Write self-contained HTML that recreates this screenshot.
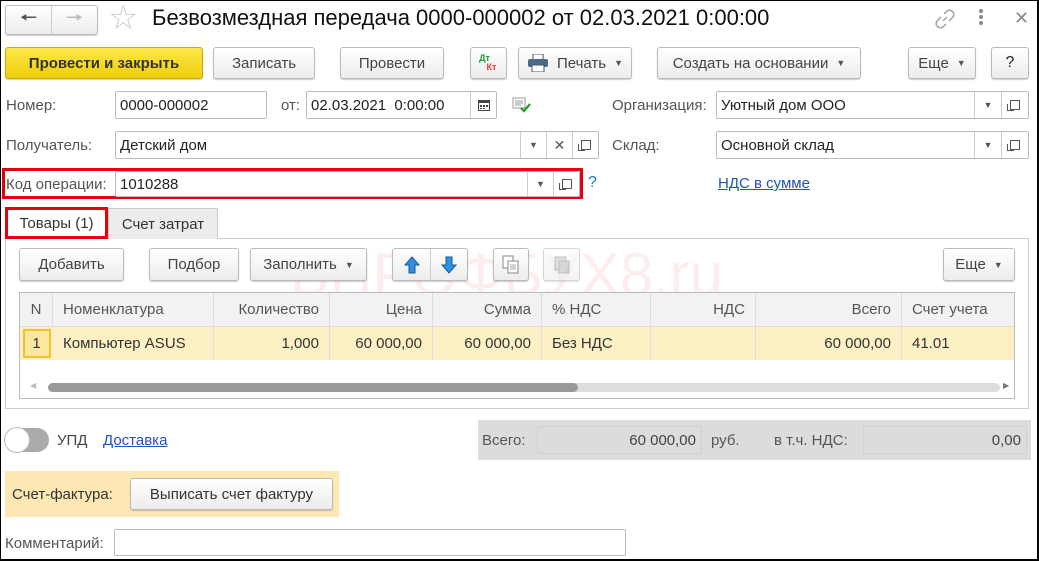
<!DOCTYPE html>
<html><head><meta charset="utf-8"><style>
*{box-sizing:border-box;margin:0;padding:0}
body{width:1039px;height:561px;overflow:hidden;background:#fff;font-family:"Liberation Sans",Arial,sans-serif;font-size:15px;color:#333;position:relative}
.frame{position:absolute;left:0;top:0;width:1039px;height:561px;border:1px solid #000;border-bottom-width:2px;border-right-width:2px}
.a{position:absolute}
.btn{position:absolute;border:1px solid #bbb;border-radius:3px;background:linear-gradient(#fff,#ececec);box-shadow:0 1px 1px rgba(0,0,0,.2);display:flex;align-items:center;justify-content:center;color:#444;white-space:nowrap}
.inp{position:absolute;border:1px solid #bbb;border-radius:2px;background:#fff;padding-left:4px;display:flex;align-items:center;color:#222;white-space:nowrap}
.lbl{position:absolute;color:#555;white-space:nowrap}
.cell{position:absolute;top:0;height:100%;display:flex;align-items:center;padding:0 10px;border-right:1px solid #ddd;white-space:nowrap}
.r{justify-content:flex-end}
.sb{position:absolute;top:0;height:100%;border-left:1px solid #ccc;display:flex;align-items:center;justify-content:center;color:#555;font-size:10px}
.cp{width:10px;height:10px;border:1px solid #555;position:relative;background:#fff}
.cp:before{content:"";position:absolute;left:-4px;top:3px;width:6px;height:6px;border-left:1px solid #555;border-bottom:1px solid #555}
.dd{font-size:9px;color:#555}
</style></head><body>

<!-- header -->
<div class="btn" style="left:5px;top:5px;width:93px;height:30px;"><span style="width:46px;text-align:center;font-size:20px;color:#555">&#129044;</span><span style="width:1px;height:28px;background:#ccc"></span><span style="width:46px;text-align:center;font-size:20px;color:#bbb">&#129046;</span></div>
<div class="a" style="left:108px;top:1px;font-size:34px;color:#ccc;line-height:34px">☆</div>
<div class="a" style="left:152px;top:5px;font-size:22px;color:#111">Безвозмездная передача 0000-000002 от 02.03.2021 0:00:00</div>
<svg class="a" style="left:934px;top:8px" width="22" height="22" viewBox="0 0 22 22"><g fill="none" stroke="#aaa" stroke-width="1.6"><path d="M9 13 L13 9"/><path d="M10 6 L13 3 Q16 1 19 4 Q21 7 18 10 L15 13"/><path d="M12 16 L9 19 Q6 21 3 18 Q1 15 4 12 L7 9"/></g></svg>
<div class="a" style="left:979px;top:9px;width:4px;"><div style="width:4px;height:4px;background:#888;border-radius:2px;margin-bottom:2px"></div><div style="width:4px;height:4px;background:#888;border-radius:2px;margin-bottom:2px"></div><div style="width:4px;height:4px;background:#888;border-radius:2px"></div></div>
<div class="a" style="left:1014px;top:8px;font-size:18px;color:#888">✕</div>

<!-- toolbar -->
<div class="btn" style="left:5px;top:47px;width:198px;height:32px;background:linear-gradient(#fbe84a,#efcd0a);border-color:#c9aa00;color:#333;font-weight:bold">Провести и закрыть</div>
<div class="btn" style="left:213px;top:47px;width:102px;height:32px">Записать</div>
<div class="btn" style="left:340px;top:47px;width:104px;height:32px">Провести</div>
<div class="btn" style="left:470px;top:47px;width:37px;height:32px;flex-direction:column;font-size:9px;font-weight:bold;line-height:9px"><span style="color:#1a9a3a;margin-left:-8px">Дт</span><span style="color:#e33;margin-left:6px">Кт</span></div>
<div class="btn" style="left:518px;top:47px;width:114px;height:32px"><svg width="22" height="18" viewBox="0 0 22 18" style="margin-right:8px"><rect x="6" y="0" width="10" height="6" fill="#fff" stroke="#456" /><rect x="1" y="5" width="20" height="8" rx="2" fill="#4a6a8a"/><rect x="5" y="11" width="12" height="7" fill="#fff" stroke="#456"/></svg>Печать <span class="dd" style="margin-left:8px">▼</span></div>
<div class="btn" style="left:657px;top:47px;width:204px;height:32px">Создать на основании <span class="dd" style="margin-left:8px">▼</span></div>
<div class="btn" style="left:908px;top:47px;width:68px;height:32px">Еще <span class="dd" style="margin-left:8px">▼</span></div>
<div class="btn" style="left:991px;top:47px;width:38px;height:32px;color:#222;font-size:16px">?</div>

<!-- row 1 -->
<div class="lbl" style="left:6px;top:97px">Номер:</div>
<div class="inp" style="left:115px;top:91px;width:152px;height:28px">0000-000002</div>
<div class="lbl" style="left:281px;top:97px">от:</div>
<div class="inp" style="left:306px;top:91px;width:191px;height:28px">02.03.2021&nbsp; 0:00:00<div class="sb" style="right:0;width:26px"><svg width="12" height="12"><rect x="0.5" y="1.5" width="11" height="10" fill="#fff" stroke="#444"/><rect x="0" y="1" width="12" height="3" fill="#444"/><g fill="#444"><rect x="2" y="6" width="2" height="2"/><rect x="5" y="6" width="2" height="2"/><rect x="8" y="6" width="2" height="2"/><rect x="2" y="9" width="2" height="1"/><rect x="5" y="9" width="2" height="1"/></g></svg></div></div>
<svg class="a" style="left:512px;top:97px" width="20" height="16"><rect x="1" y="1" width="12" height="10" fill="#fff" stroke="#999"/><path d="M3 4h8M3 6h8M3 8h6" stroke="#999"/><path d="M9 11l3 3 6-7" stroke="#2a9a2a" stroke-width="2.2" fill="none"/></svg>
<div class="lbl" style="left:612px;top:97px">Организация:</div>
<div class="inp" style="left:716px;top:91px;width:313px;height:28px">Уютный дом ООО<div class="sb" style="right:27px;width:27px"><span class="dd">▼</span></div><div class="sb" style="right:0;width:27px"><div class="cp"></div></div></div>

<!-- row 2 -->
<div class="lbl" style="left:6px;top:137px">Получатель:</div>
<div class="inp" style="left:115px;top:131px;width:484px;height:28px">Детский дом<div class="sb" style="right:52px;width:26px"><span class="dd">▼</span></div><div class="sb" style="right:26px;width:26px;font-size:14px">✕</div><div class="sb" style="right:0;width:26px"><div class="cp"></div></div></div>
<div class="lbl" style="left:612px;top:137px">Склад:</div>
<div class="inp" style="left:716px;top:131px;width:313px;height:28px">Основной склад<div class="sb" style="right:27px;width:27px"><span class="dd">▼</span></div><div class="sb" style="right:0;width:27px"><div class="cp"></div></div></div>

<!-- row 3 -->
<div class="a" style="left:2px;top:168px;width:581px;height:31px;border:3px solid #e5000f"></div>
<div class="lbl" style="left:6px;top:176px">Код операции:</div>
<div class="inp" style="left:115px;top:171px;width:465px;height:26px">1010288<div class="sb" style="right:26px;width:26px"><span class="dd">▼</span></div><div class="sb" style="right:0;width:26px"><div class="cp"></div></div></div>
<div class="a" style="left:588px;top:174px;color:#1a7ad4;font-size:16px">?</div>
<div class="a" style="left:718px;top:175px;color:#1a55b8;text-decoration:underline">НДС в сумме</div>

<!-- tabs -->
<div class="a" style="left:5px;top:238px;width:1024px;height:171px;border:1px solid #ccc"></div>
<div class="a" style="left:108px;top:208px;width:110px;height:31px;background:#ececec;border:1px solid #ccc;border-bottom:none;display:flex;align-items:center;justify-content:center;color:#333">Счет затрат</div>
<div class="a" style="left:5px;top:207px;width:103px;height:32px;background:#fff;border:3px solid #e5000f;display:flex;align-items:center;justify-content:center;color:#333">Товары (1)</div>

<!-- watermark -->
<div class="a" style="left:290px;top:240px;font-size:60px;color:rgba(230,60,60,.09);white-space:nowrap">БПРОФБУХ8.ru</div>
<div class="a" style="left:360px;top:298px;font-size:19px;color:rgba(0,0,0,.07);letter-spacing:5px;white-space:nowrap">Онлайн-курсы по работе в 1С:8</div>

<!-- inner toolbar -->
<div class="btn" style="left:19px;top:248px;width:105px;height:33px">Добавить</div>
<div class="btn" style="left:149px;top:248px;width:90px;height:33px">Подбор</div>
<div class="btn" style="left:250px;top:248px;width:117px;height:33px">Заполнить <span class="dd" style="margin-left:8px">▼</span></div>
<div class="btn" style="left:392px;top:248px;width:76px;height:33px"><svg width="38" height="20"><path d="M19 2l-7 8h4v8h6v-8h4z" fill="#2f8fe0" stroke="#1a5a9a"/></svg><span style="width:1px;height:31px;background:#ccc"></span><svg width="37" height="20"><path d="M18 18l-7-8h4V2h6v8h4z" fill="#2f8fe0" stroke="#1a5a9a"/></svg></div>
<div class="btn" style="left:493px;top:248px;width:36px;height:33px"><svg width="18" height="20"><rect x="1" y="1" width="10" height="12" fill="#fff" stroke="#888"/><rect x="6" y="6" width="10" height="12" fill="#fff" stroke="#888"/><path d="M8 10h6M8 12h6M8 14h6" stroke="#aaa"/></svg></div>
<div class="btn" style="left:543px;top:248px;width:37px;height:33px;opacity:.6"><svg width="18" height="20"><rect x="2" y="2" width="11" height="13" fill="#ccc" stroke="#999"/><rect x="6" y="6" width="10" height="12" fill="#bbb" stroke="#999"/></svg></div>
<div class="btn" style="left:943px;top:248px;width:72px;height:33px">Еще <span class="dd" style="margin-left:8px">▼</span></div>

<!-- table -->
<div class="a" style="left:19px;top:292px;width:996px;height:107px;border:1px solid #bbb"></div>
<div class="a" style="left:20px;top:293px;width:994px;height:34px;background:#f2f2f2;color:#555;border-bottom:1px solid #ddd">
<div class="cell" style="left:0;width:33px;justify-content:center;padding:0">N</div>
<div class="cell" style="left:33px;width:161px">Номенклатура</div>
<div class="cell r" style="left:194px;width:116px">Количество</div>
<div class="cell r" style="left:310px;width:103px">Цена</div>
<div class="cell r" style="left:413px;width:109px">Сумма</div>
<div class="cell" style="left:522px;width:109px">% НДС</div>
<div class="cell r" style="left:631px;width:105px">НДС</div>
<div class="cell r" style="left:736px;width:146px">Всего</div>
<div class="cell" style="left:882px;width:112px;border:none">Счет учета</div>
</div>
<div class="a" style="left:20px;top:327px;width:994px;height:33px;background:#fcf0c4;color:#333">
<div class="cell" style="left:0;width:33px;justify-content:center;padding:0;border:none"><div style="width:28px;height:29px;border:2px solid #f2c12e;background:#fbe79e;display:flex;align-items:center;justify-content:center">1</div></div>
<div class="cell" style="left:33px;width:161px">Компьютер ASUS</div>
<div class="cell r" style="left:194px;width:116px">1,000</div>
<div class="cell r" style="left:310px;width:103px">60 000,00</div>
<div class="cell r" style="left:413px;width:109px">60 000,00</div>
<div class="cell" style="left:522px;width:109px">Без НДС</div>
<div class="cell r" style="left:631px;width:105px"></div>
<div class="cell r" style="left:736px;width:146px">60 000,00</div>
<div class="cell" style="left:882px;width:112px;border:none">41.01</div>
</div>
<div class="a" style="left:48px;top:383px;width:952px;height:9px;background:#ddd;border-radius:5px"></div>
<div class="a" style="left:48px;top:383px;width:530px;height:9px;background:#999;border-radius:5px"></div>
<div class="a" style="left:30px;top:381px;font-size:8px;color:#bbb">◀</div>
<div class="a" style="left:1003px;top:381px;font-size:8px;color:#777">▶</div>

<!-- bottom -->
<div class="a" style="left:5px;top:428px;width:44px;height:24px;border-radius:12px;background:#aaa"></div>
<div class="a" style="left:4px;top:427px;width:26px;height:26px;border-radius:13px;background:#fff;border:1px solid #bbb"></div>
<div class="lbl" style="left:57px;top:432px;color:#444">УПД</div>
<div class="a" style="left:103px;top:432px;color:#1a55b8;text-decoration:underline">Доставка</div>
<div class="a" style="left:478px;top:420px;width:553px;height:40px;background:#dcdcdc"></div>
<div class="lbl" style="left:482px;top:432px">Всего:</div>
<div class="a" style="left:537px;top:426px;width:165px;height:28px;border:1px solid #d0d0d0;border-radius:2px;display:flex;align-items:center;justify-content:flex-end;padding-right:5px;color:#444">60 000,00</div>
<div class="lbl" style="left:711px;top:432px">руб.</div>
<div class="lbl" style="left:774px;top:432px">в т.ч. НДС:</div>
<div class="a" style="left:863px;top:426px;width:164px;height:28px;border:1px solid #d0d0d0;border-radius:2px;display:flex;align-items:center;justify-content:flex-end;padding-right:5px;color:#444">0,00</div>

<div class="a" style="left:5px;top:471px;width:334px;height:46px;background:#fde8b4"></div>
<div class="lbl" style="left:12px;top:486px;color:#333">Счет-фактура:</div>
<div class="btn" style="left:130px;top:478px;width:203px;height:32px;color:#333">Выписать счет фактуру</div>

<div class="lbl" style="left:5px;top:535px;color:#555">Комментарий:</div>
<div class="inp" style="left:114px;top:529px;width:512px;height:27px"></div>

<div class="frame"></div>
</body></html>
